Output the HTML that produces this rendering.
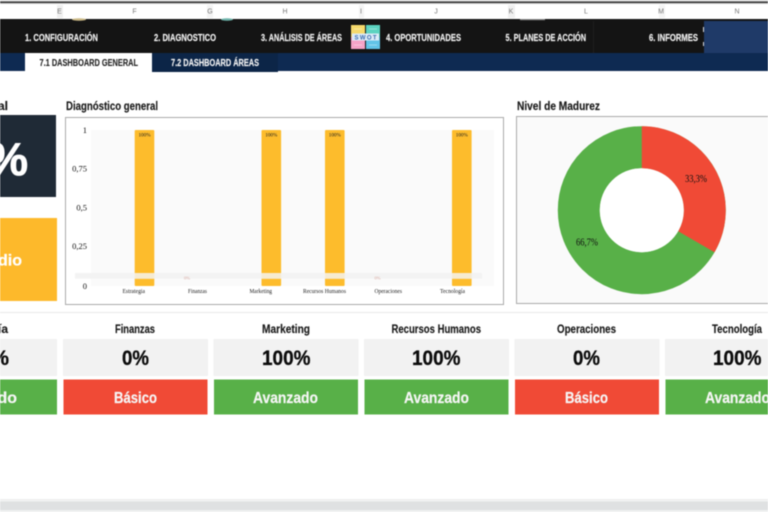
<!DOCTYPE html>
<html lang="es"><head><meta charset="utf-8"><title>Dashboard</title>
<style>
html,body{margin:0;padding:0;width:768px;height:512px;overflow:hidden;background:#fff}
svg{display:block;filter:blur(.45px)}
.s{font-family:"Liberation Sans",sans-serif;font-weight:700}
.r{font-family:"Liberation Serif",serif}
.n{font-size:10px;fill:#f2f2f2;stroke:#f2f2f2;stroke-width:.15px}
.t{font-size:10px;fill:#f4f4f4;stroke:#f4f4f4;stroke-width:.15px}
.h{font-size:12px;fill:#1a1a1a;stroke:#1a1a1a;stroke-width:.15px}
.p{font-size:21px;fill:#0c0c0c;stroke:#0c0c0c;stroke-width:.3px}
.l{font-size:16px;fill:#f6f6f6;stroke:#f6f6f6;stroke-width:.2px}
.x{font-size:6px;fill:#222}
.y{font-size:8.5px;fill:#111}
.c{font-family:"Liberation Sans",sans-serif;font-size:7px;fill:#777}
</style></head><body>
<svg width="768" height="512" viewBox="0 0 768 512" xmlns="http://www.w3.org/2000/svg">
<rect width="768" height="512" fill="#fff"/>
<!-- top lines -->
<rect width="768" height="1.5" fill="#ddd"/>
<rect y="1.5" width="768" height="1.5" fill="#333"/>
<rect y="3" width="768" height="1" fill="#ccc"/>
<rect x="57" y="5" width="6" height="13" fill="#f0f0f0"/>
<rect x="207" y="5" width="6" height="13" fill="#f4f4f4"/>
<rect x="359" y="5" width="5" height="13" fill="#f4f4f4"/>
<rect x="508" y="5" width="7" height="13" fill="#f0f0f0"/>
<rect x="659" y="5" width="6" height="13" fill="#f4f4f4"/>
<g class="c" text-anchor="middle">
<text x="59.5" y="13.5">E</text><text x="134.5" y="13.5">F</text><text x="210" y="13.5">G</text><text x="285" y="13.5">H</text><text x="361" y="13.5">I</text><text x="436" y="13.5">J</text><text x="511" y="13.5">K</text><text x="586" y="13.5">L</text><text x="661" y="13.5">M</text><text x="737" y="13.5">N</text>
</g>
<!-- nav -->
<rect y="19" width="768" height="34" fill="#141414"/>
<ellipse cx="79" cy="19.5" rx="7" ry="1.2" fill="#cdbb88"/>
<ellipse cx="227" cy="19.5" rx="6" ry="1.2" fill="#6fb5ac"/>
<rect x="520" y="19" width="25" height="1.2" fill="#888"/>
<rect x="593" y="21" width="1" height="32" fill="#1f1f1f"/>
<rect x="704" y="21" width="64" height="32" fill="#1f3a68"/>
<rect x="703" y="27" width="1" height="5" fill="#ddd"/>
<rect x="703" y="42" width="1" height="4" fill="#ddd"/>
<g class="s n">
<text x="25" y="41" textLength="73" lengthAdjust="spacingAndGlyphs">1. CONFIGURACIÓN</text>
<text x="154" y="41" textLength="62" lengthAdjust="spacingAndGlyphs">2. DIAGNOSTICO</text>
<text x="261" y="41" textLength="81" lengthAdjust="spacingAndGlyphs">3. ANÁLISIS DE ÁREAS</text>
<text x="386" y="41" textLength="75" lengthAdjust="spacingAndGlyphs">4. OPORTUNIDADES</text>
<text x="505.5" y="41" textLength="80.5" lengthAdjust="spacingAndGlyphs">5. PLANES DE ACCIÓN</text>
<text x="649" y="41" textLength="49" lengthAdjust="spacingAndGlyphs">6. INFORMES</text>
</g>
<!-- SWOT icon -->
<rect x="351" y="25" width="14" height="12" fill="#f5d96b"/>
<rect x="366" y="25" width="14" height="12" fill="#5cd3c0"/>
<rect x="351" y="37" width="14" height="12" fill="#f5a3c7"/>
<rect x="366" y="37" width="14" height="12" fill="#62c4e8"/>
<g stroke="#fff" stroke-opacity=".5" stroke-width=".7">
<path d="M354 29h8M369 29h8M354 45h8M369 45h8"/>
</g>
<rect x="352" y="33.5" width="27" height="7" fill="#dcebf7"/>
<text x="354.5" y="39.3" class="s" font-size="6" fill="#3a6cb0" textLength="22" lengthAdjust="spacing">SWOT</text>
<!-- subnav -->
<rect y="53" width="768" height="18" fill="#0e2a52"/>
<rect x="152" y="53" width="126" height="19" fill="#0c2547"/>
<rect x="25" y="53" width="127" height="19" fill="#fff"/>
<text x="39.5" y="66" class="s" font-size="10" fill="#222" stroke="#222" stroke-width=".1" textLength="98.5" lengthAdjust="spacingAndGlyphs">7.1 DASHBOARD GENERAL</text>
<text x="171" y="66" class="s t" textLength="88" lengthAdjust="spacingAndGlyphs">7.2 DASHBOARD ÁREAS</text>
<!-- headings -->
<g class="s h">
<text x="8" y="110" text-anchor="end">al</text>
<text x="66" y="110" textLength="92" lengthAdjust="spacingAndGlyphs">Diagnóstico general</text>
<text x="517" y="110" textLength="83" lengthAdjust="spacingAndGlyphs">Nivel de Madurez</text>
</g>
<!-- left KPI -->
<rect x="0" y="115" width="56" height="82" fill="#1f2a36"/>
<text x="28" y="175" text-anchor="end" class="s" font-size="46" fill="#fff" stroke="#fff" stroke-width=".8">67%</text>
<rect x="0" y="218" width="57" height="83" fill="#fdb92b"/>
<text x="22" y="265.5" text-anchor="end" class="s" font-size="16" fill="#fff" stroke="#fff" stroke-width=".2">Medio</text>
<!-- bar chart -->
<rect x="65.5" y="117.5" width="438" height="187" fill="#fff" stroke="#aaa"/>
<rect x="91" y="130" width="403" height="156" fill="#fafafa"/>
<g fill="#fdbc2c">
<rect x="134.7" y="130" width="19.6" height="156" rx="1"/>
<rect x="261.5" y="130" width="19.6" height="156" rx="1"/>
<rect x="325" y="130" width="19.6" height="156" rx="1"/>
<rect x="452" y="130" width="19.6" height="156" rx="1"/>
</g>
<rect x="75" y="273" width="407" height="5.7" fill="#f3f3f3"/>
<g fill="#f6ebd2">
<rect x="134.7" y="273" width="19.6" height="5.7"/>
<rect x="261.5" y="273" width="19.6" height="5.7"/>
<rect x="325" y="273" width="19.6" height="5.7"/>
<rect x="452" y="273" width="19.6" height="5.7"/>
</g>
<g class="r" font-size="5.2" fill="#222" text-anchor="middle">
<text x="144.5" y="136.5">100%</text><text x="271.3" y="136.5">100%</text><text x="334.8" y="136.5">100%</text><text x="461.8" y="136.5">100%</text>
</g>
<g class="r" font-size="4.5" fill="#d9a9a0" text-anchor="middle">
<text x="187" y="279.5">0%</text><text x="377.5" y="279.5">0%</text>
</g>
<g class="r y" text-anchor="end">
<text x="87" y="133">1</text><text x="87" y="171.5">0,75</text><text x="87" y="210.5">0,5</text><text x="87" y="249">0,25</text><text x="87" y="289">0</text>
</g>
<g class="r x">
<text x="122.5" y="293" textLength="22.5" lengthAdjust="spacingAndGlyphs">Estrategia</text>
<text x="188" y="293" textLength="19" lengthAdjust="spacingAndGlyphs">Finanzas</text>
<text x="249.5" y="293" textLength="22.5" lengthAdjust="spacingAndGlyphs">Marketing</text>
<text x="303" y="293" textLength="43" lengthAdjust="spacingAndGlyphs">Recursos Humanos</text>
<text x="374.5" y="293" textLength="27.5" lengthAdjust="spacingAndGlyphs">Operaciones</text>
<text x="440" y="293" textLength="25" lengthAdjust="spacingAndGlyphs">Tecnología</text>
</g>
<!-- donut -->
<rect x="516.5" y="116.5" width="260" height="187" fill="#fafafa" stroke="#aaa"/>
<circle cx="641.8" cy="210.2" r="63" fill="none" stroke="#58b048" stroke-width="42"/>
<path d="M641.8 126.2A84 84 0 0 1 714.5 252.2L678.2 231.2A42 42 0 0 0 641.8 168.2Z" fill="#f04a36"/>
<circle cx="641.8" cy="210.2" r="42" fill="#fff"/>
<g class="r" font-size="10.5" fill="#111">
<text x="685" y="182" textLength="22" lengthAdjust="spacingAndGlyphs">33,3%</text>
<text x="576" y="245.5" textLength="22" lengthAdjust="spacingAndGlyphs">66,7%</text>
</g>
<!-- divider -->
<rect y="312" width="768" height="1" fill="#e8e8e8"/>
<!-- cards -->
<g fill="#f2f2f2">
<rect x="-88" y="339" width="145" height="37"/>
<rect x="63" y="339" width="145" height="37"/>
<rect x="213.5" y="339" width="145" height="37"/>
<rect x="364" y="339" width="145" height="37"/>
<rect x="514.5" y="339" width="145" height="37"/>
<rect x="665" y="339" width="145" height="37"/>
</g>
<rect x="-88" y="379.5" width="145" height="35" fill="#58b048"/>
<rect x="63.5" y="379.5" width="144" height="35" fill="#f04a36"/>
<rect x="214" y="379.5" width="144" height="35" fill="#58b048"/>
<rect x="364.5" y="379.5" width="144" height="35" fill="#58b048"/>
<rect x="515" y="379.5" width="144" height="35" fill="#f04a36"/>
<rect x="665.5" y="379.5" width="144" height="35" fill="#58b048"/>
<g class="s h">
<text x="8" y="333" text-anchor="end">ía</text>
<text x="115" y="333" textLength="40" lengthAdjust="spacingAndGlyphs">Finanzas</text>
<text x="262" y="333" textLength="48" lengthAdjust="spacingAndGlyphs">Marketing</text>
<text x="391.5" y="333" textLength="89.5" lengthAdjust="spacingAndGlyphs">Recursos Humanos</text>
<text x="557" y="333" textLength="59" lengthAdjust="spacingAndGlyphs">Operaciones</text>
<text x="712" y="333" textLength="50" lengthAdjust="spacingAndGlyphs">Tecnología</text>
</g>
<g class="s p">
<text x="9" y="365" text-anchor="end">%</text>
<text x="122" y="365" textLength="27" lengthAdjust="spacingAndGlyphs">0%</text>
<text x="262" y="365" textLength="48.5" lengthAdjust="spacingAndGlyphs">100%</text>
<text x="412" y="365" textLength="48.5" lengthAdjust="spacingAndGlyphs">100%</text>
<text x="573" y="365" textLength="27" lengthAdjust="spacingAndGlyphs">0%</text>
<text x="713" y="365" textLength="48.5" lengthAdjust="spacingAndGlyphs">100%</text>
</g>
<g class="s l">
<text x="17" y="403" text-anchor="end">do</text>
<text x="114" y="403" textLength="43" lengthAdjust="spacingAndGlyphs">Básico</text>
<text x="253" y="403" textLength="65" lengthAdjust="spacingAndGlyphs">Avanzado</text>
<text x="404" y="403" textLength="65" lengthAdjust="spacingAndGlyphs">Avanzado</text>
<text x="565" y="403" textLength="43" lengthAdjust="spacingAndGlyphs">Básico</text>
<text x="705" y="403" textLength="65" lengthAdjust="spacingAndGlyphs">Avanzado</text>
</g>
<!-- bottom bar -->
<rect y="499" width="768" height="1" fill="#eceeee"/>
<rect y="500" width="768" height="1.5" fill="#f2f3f3"/>
<rect y="501.5" width="768" height="8.5" fill="#dfe1e2"/>
<rect y="510" width="768" height="2" fill="#eef0f0"/>
</svg>
</body></html>
